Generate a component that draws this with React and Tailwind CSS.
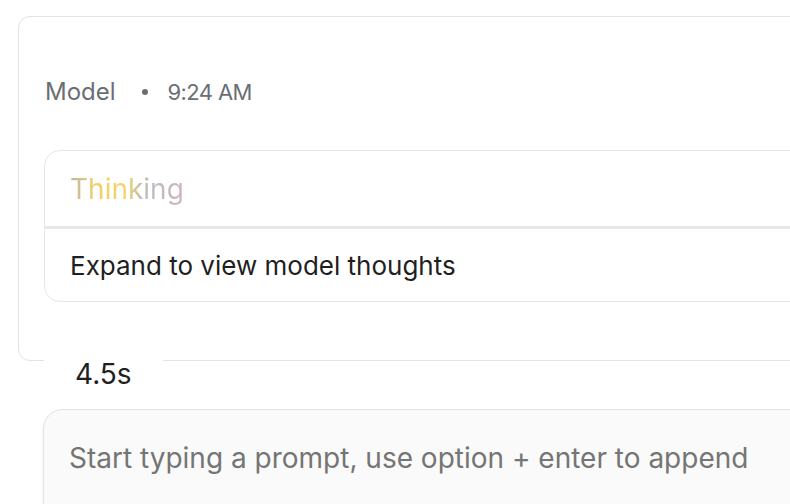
import React from "react";

export default function App() {
  return (
    <div
      className="w-[790px] h-[504px] overflow-hidden bg-white"
      style={{ fontFamily: "Inter, 'Noto Sans', sans-serif" }}
    >
      <div className="pt-[16px] pl-[18px]">
        <div className="w-[820px] h-[345px] border border-[#e3e3e3] rounded-[12px] pt-[61px] pl-[25px]">
          <div className="flex items-center h-[28px] text-[24px] text-[#6b6e75] leading-[28px] pl-[1px]">
            <span>Model</span>
            <span className="ml-[26px] mr-[20px] w-[6px] h-[6px] rounded-full bg-[#6b6e75]"></span>
            <span className="text-[22px] tracking-[-0.6px]">9:24 AM</span>
          </div>
          <div className="mt-[44px] w-[800px] border border-[#e6e6e6] rounded-[16px] overflow-hidden">
            <div className="h-[75px] flex items-center pl-[25px]">
              <span
                className="text-[28px] leading-[34px] bg-clip-text text-transparent"
                style={{
                  backgroundImage:
                    "linear-gradient(90deg, #bdb8a6 0%, #f3cf65 22%, #f6d36a 48%, #c4bea4 62%, #b9bec8 72%, #d4b4b6 100%)",
                }}
              >
                Thinking
              </span>
            </div>
            <div className="h-[3px] bg-[#e8e8e8]"></div>
            <div className="h-[72px] flex items-center pl-[25px] text-[26px] text-[#1f1f1f]">
              Expand to view model thoughts
            </div>
          </div>
        </div>
      </div>
      <div className="relative -mt-[2px] ml-[44px] w-[119px] h-[30px] bg-white pl-[31px] text-[28px] leading-[30px] text-[#1f1f1f]">
        4.5s
      </div>
      <div className="mt-[20px] ml-[43px] w-[800px] h-[120px] bg-[#fafafa] border border-[#e3e3e3] rounded-[20px] pt-[31px] pl-[25px] text-[28px] leading-[34px] text-[#757575] shadow-[-1px_1px_3px_rgba(0,0,0,0.04)]">
        Start typing a prompt, use option + enter to append
      </div>
    </div>
  );
}
